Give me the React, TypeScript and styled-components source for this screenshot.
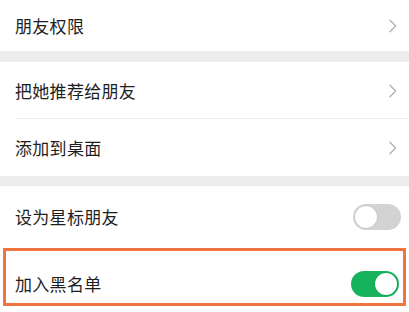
import React, { useState } from "react";
import styled, { createGlobalStyle } from "styled-components";

const GlobalStyle = createGlobalStyle`
  html, body {
    margin: 0;
    padding: 0;
    background: #ffffff;
  }
  body {
    font-family: "Noto Sans CJK SC", "Noto Sans", sans-serif;
  }
`;

const Page = styled.main`
  width: 409px;
  height: 312px;
  overflow: hidden;
  background: #ffffff;
  display: flex;
  flex-direction: column;
`;

const Band = styled.div<{ $h: number }>`
  height: ${(p) => p.$h}px;
  background: #ededed;
  flex-shrink: 0;
`;

const Row = styled.div<{ $h: number; $divider?: boolean; $pr?: number }>`
  position: relative;
  height: ${(p) => p.$h}px;
  flex-shrink: 0;
  display: flex;
  align-items: center;
  justify-content: space-between;
  padding: 0 ${(p) => p.$pr ?? 12}px 0 15px;
  box-sizing: border-box;
  ${(p) =>
    p.$divider &&
    `
    &::after {
      content: "";
      position: absolute;
      left: 16px;
      right: 0;
      bottom: 0;
      height: 1px;
      background: #ececec;
    }
  `}
`;

const Label = styled.span`
  font-size: 17px;
  line-height: 24px;
  color: #1e1e1e;
  letter-spacing: 0.3px;
`;

const Highlight = styled.div`
  margin: 0 3px;
  height: 58px;
  flex-shrink: 0;
  border: 3px solid #f0743f;
  box-sizing: border-box;
  display: flex;
  align-items: center;
  justify-content: space-between;
  padding: 14px 4px 0 9px;
`;

const Track = styled.button<{ $on: boolean }>`
  width: 48px;
  height: 26px;
  border-radius: 13px;
  border: none;
  padding: 2px;
  box-sizing: border-box;
  cursor: pointer;
  display: flex;
  justify-content: ${(p) => (p.$on ? "flex-end" : "flex-start")};
  background: ${(p) => (p.$on ? "#16b35c" : "#d3d3d3")};
`;

const Knob = styled.span`
  width: 22px;
  height: 22px;
  border-radius: 50%;
  background: #ffffff;
  box-shadow: 0 0 0 0.5px rgba(0, 0, 0, 0.1);
`;

const Chevron = () => (
  <svg width="8" height="14" viewBox="0 0 8 14">
    <path
      d="M1 1.2 L6.6 7 L1 12.8"
      fill="none"
      stroke="#b2b2b2"
      strokeWidth="1.4"
      strokeLinecap="round"
      strokeLinejoin="round"
    />
  </svg>
);

const Toggle: React.FC<{ on: boolean; onChange: () => void }> = ({
  on,
  onChange,
}) => (
  <Track $on={on} onClick={onChange}>
    <Knob />
  </Track>
);

export default function App() {
  const [star, setStar] = useState(false);
  const [black, setBlack] = useState(true);

  return (
    <Page>
      <GlobalStyle />
      <Row $h={51}>
        <Label>朋友权限</Label>
        <Chevron />
      </Row>
      <Band $h={11} />
      <Row $h={57} $divider>
        <Label>把她推荐给朋友</Label>
        <Chevron />
      </Row>
      <Row $h={57}>
        <Label>添加到桌面</Label>
        <Chevron />
      </Row>
      <Band $h={10} />
      <Row $h={62} $pr={8}>
        <Label>设为星标朋友</Label>
        <Toggle on={star} onChange={() => setStar(!star)} />
      </Row>
      <Highlight>
        <Label>加入黑名单</Label>
        <Toggle on={black} onChange={() => setBlack(!black)} />
      </Highlight>
    </Page>
  );
}
